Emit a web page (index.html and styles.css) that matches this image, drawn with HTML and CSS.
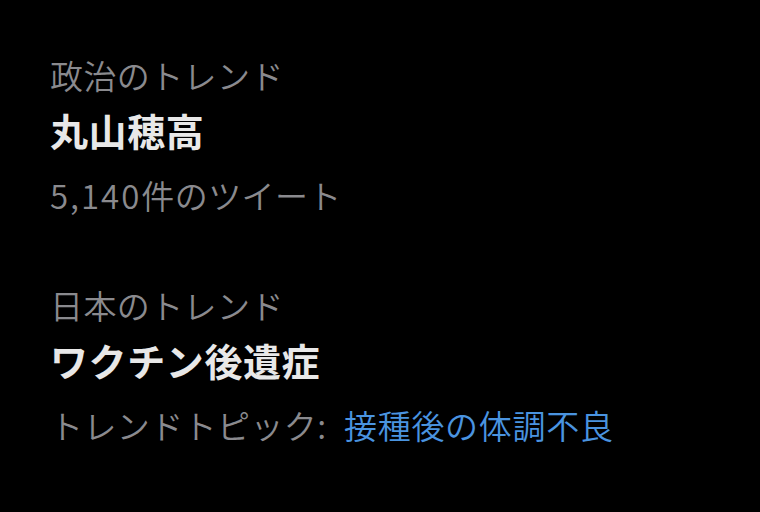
FILE: index.html
```html
<!DOCTYPE html>
<html lang="ja">
<head>
<meta charset="utf-8">
<link rel="stylesheet" href="styles.css">
</head>
<body>
<div class="list">
  <div class="trend">
    <div class="meta">政治のトレンド</div>
    <div class="title">丸山穂高</div>
    <div class="meta count"><span class="num">5,140</span>件のツイート</div>
  </div>
  <div class="trend">
    <div class="meta">日本のトレンド</div>
    <div class="title">ワクチン後遺症</div>
    <div class="meta count">トレンドトピック:&nbsp; <span class="link">接種後の体調不良</span></div>
  </div>
</div>
</body>
</html>
```
FILE: styles.css
```css
html, body {
  margin: 0;
  padding: 0;
  background: #000;
  height: 100%;
}
body {
  font-family: "Noto Sans CJK JP", "Noto Sans", sans-serif;
  -webkit-font-smoothing: antialiased;
}
.list {
  display: flex;
  flex-direction: column;
  gap: 64px;
  padding: 52px 0 0 50px;
}
.trend {
  display: flex;
  flex-direction: column;
}
.meta {
  color: #8a8a8e;
  font-size: 33px;
  line-height: 46px;
  font-weight: 350;
  letter-spacing: 0.4px;
}
.num {
  letter-spacing: 2px;
}
.title {
  color: #e8e8e8;
  font-size: 38px;
  line-height: 56px;
  font-weight: 700;
  margin-top: 4px;
  letter-spacing: 0.6px;
}
.count {
  margin-top: 14px;
}
.link {
  color: #4a94e0;
  letter-spacing: 0.7px;
  margin-left: 2px;
}
```
